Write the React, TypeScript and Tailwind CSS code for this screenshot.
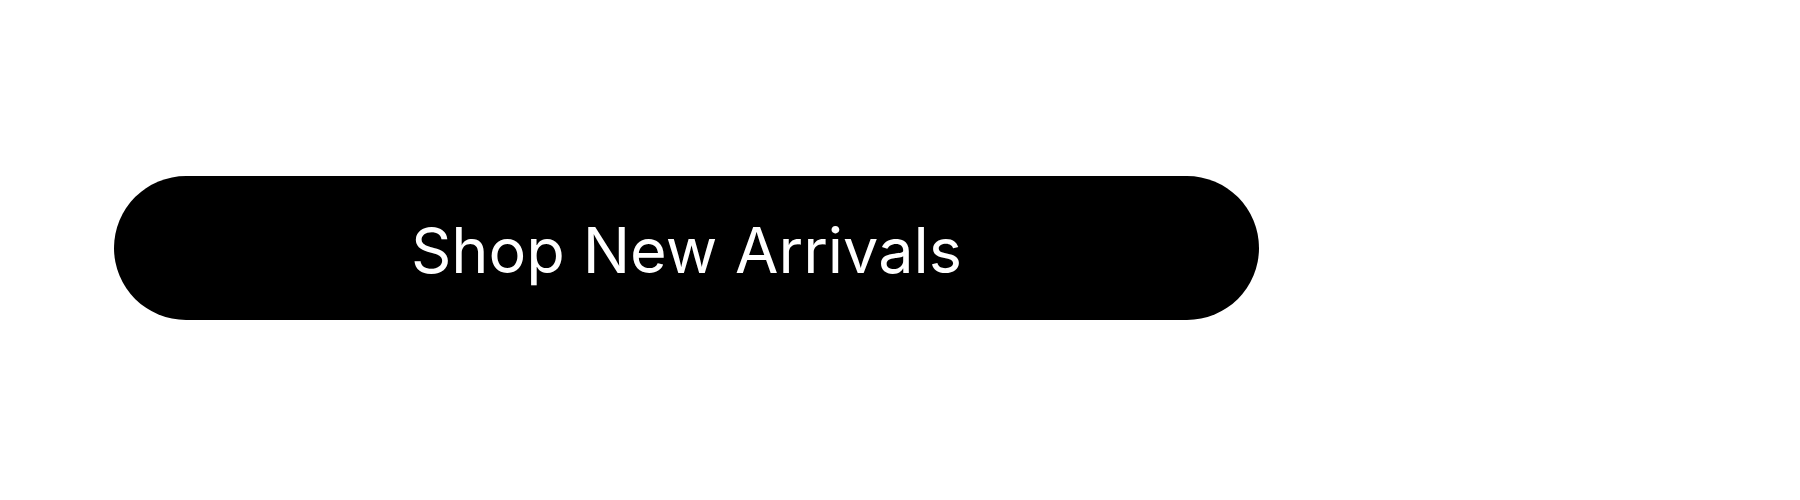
export default function App() {
  return (
    <div className="w-[1800px] h-[500px] bg-white pt-[176px] pl-[114px]">
      <button
        type="button"
        className="flex items-center justify-center w-[1145px] h-[144px] pt-[4px] rounded-full bg-black text-white text-[63px] leading-none font-['Inter','Liberation_Sans',sans-serif]"
      >
        Shop New Arrivals
      </button>
    </div>
  );
}
